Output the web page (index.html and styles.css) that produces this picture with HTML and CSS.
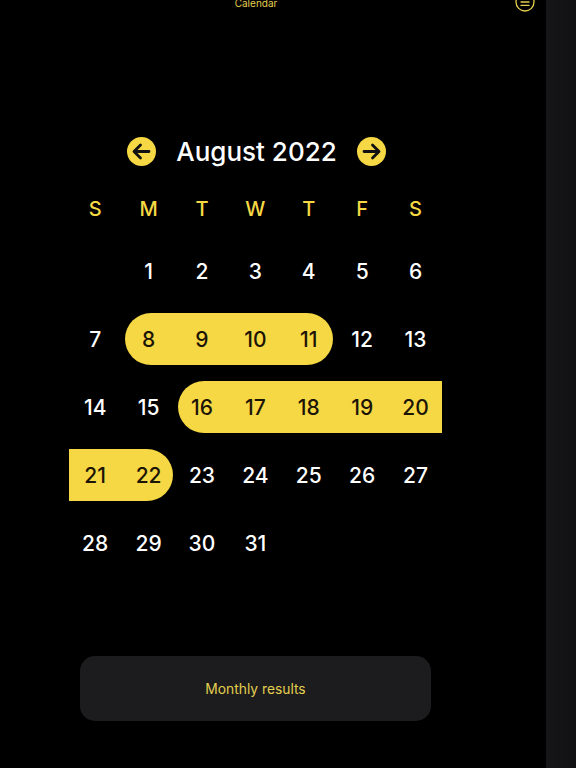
FILE: index.html
```html
<!DOCTYPE html>
<html lang="en">
<head>
    <meta charset="UTF-8">
    <meta name="viewport" content="width=device-width, initial-scale=1.0">
    <title>Calendar</title>
    <link rel="stylesheet" href="styles.css">
</head>
<body>

    <div class="screen">
        <div class="top-bar">
            <span class="top-title">Calendar</span>
            <svg class="menu-icon" width="20" height="20" viewBox="0 0 20 20" fill="none" stroke="#e3ce4e" stroke-linecap="round">
                <circle cx="10" cy="10" r="9" stroke-width="1.3"/>
                <path d="M6 6.6h8M6 10h8M6 13.4h8" stroke-width="1.3"/>
            </svg>
        </div>

        <div class="month-nav">
            <svg class="arrow" width="29" height="29" viewBox="0 0 29 29" fill="none" stroke="#111" stroke-width="2.8" stroke-linecap="round" stroke-linejoin="round">
                <circle cx="14.5" cy="14.5" r="14.5" fill="#f5d844" stroke="none"/>
                <path d="M22 14.5H7.5M13.5 8l-6.5 6.5L13.5 21"/>
            </svg>
            <h1 class="month-title">August 2022</h1>
            <svg class="arrow" width="29" height="29" viewBox="0 0 29 29" fill="none" stroke="#111" stroke-width="2.8" stroke-linecap="round" stroke-linejoin="round">
                <circle cx="14.5" cy="14.5" r="14.5" fill="#f5d844" stroke="none"/>
                <path d="M7 14.5H21.5M15.5 8l6.5 6.5L15.5 21"/>
            </svg>
        </div>

        <div class="weekdays">
            <span>S</span><span>M</span><span>T</span><span>W</span><span>T</span><span>F</span><span>S</span>
        </div>

        <div class="days">
            <div class="day blank"></div>
            <div class="day">1</div>
            <div class="day">2</div>
            <div class="day">3</div>
            <div class="day">4</div>
            <div class="day">5</div>
            <div class="day">6</div>

            <div class="day">7</div>
            <div class="day marked first">8</div>
            <div class="day marked">9</div>
            <div class="day marked">10</div>
            <div class="day marked last">11</div>
            <div class="day">12</div>
            <div class="day">13</div>

            <div class="day">14</div>
            <div class="day">15</div>
            <div class="day marked first">16</div>
            <div class="day marked">17</div>
            <div class="day marked">18</div>
            <div class="day marked">19</div>
            <div class="day marked">20</div>

            <div class="day marked">21</div>
            <div class="day marked last">22</div>
            <div class="day">23</div>
            <div class="day">24</div>
            <div class="day">25</div>
            <div class="day">26</div>
            <div class="day">27</div>

            <div class="day">28</div>
            <div class="day">29</div>
            <div class="day">30</div>
            <div class="day">31</div>
        </div>

        <button class="results-button">Monthly results</button>
    </div>

    <div class="side-strip"></div>

</body>
</html>
```

FILE: styles.css
```css
html, body {
    height: 100%;
}

body {
    margin: 0;
    display: flex;
    overflow: hidden;
    background-color: #000;
    font-family: Inter, "Liberation Sans", sans-serif;
}

.screen {
    width: 546px;
    flex-shrink: 0;
}

.side-strip {
    flex: 1;
    background: linear-gradient(to right, #161618, #111113);
}

/* Top bar sits partly above the top of the screenshot */
.top-bar {
    position: relative;
    height: 16px;
    display: flex;
    justify-content: center;
    width: 512px;
    margin-top: -8px;
}

.top-title {
    margin-top: 8px;
    font-size: 10px;
    line-height: 6px;
    color: #e3ce4e;
}

.menu-icon {
    position: absolute;
    right: -23px;
    top: 0;
}

.month-nav {
    display: flex;
    align-items: center;
    justify-content: center;
    gap: 20px;
    width: 513px;
    height: 40px;
    margin-top: 123px;
}

.month-title {
    margin: 0;
    font-size: 26px;
    font-weight: 500;
    color: #fff;
}

.weekdays,
.days {
    display: grid;
    grid-template-columns: repeat(7, 53.4px);
    margin-left: 68.5px;
}

.weekdays {
    margin-top: 24px;
    height: 28px;
    align-items: center;
    text-align: center;
    font-size: 20px;
    font-weight: 500;
    color: #f5d844;
}

.days {
    grid-auto-rows: 52px;
    row-gap: 16px;
    margin-top: 22px;
}

.day {
    display: flex;
    align-items: center;
    justify-content: center;
    font-size: 21px;
    font-weight: 500;
    color: #fff;
}

.marked {
    background-color: #f5d844;
    color: #1c1405;
}

.first {
    margin-left: 3px;
    padding-right: 3px;
    border-radius: 26px 0 0 26px;
}

.last {
    margin-right: 2px;
    padding-left: 2px;
    border-radius: 0 26px 26px 0;
}

.results-button {
    display: block;
    width: 351px;
    height: 65px;
    margin-top: 87px;
    margin-left: 80px;
    border: none;
    border-radius: 15px;
    background-color: #1c1c1e;
    color: #e3ce4e;
    font-family: inherit;
    font-size: 13.8px;
}
```
